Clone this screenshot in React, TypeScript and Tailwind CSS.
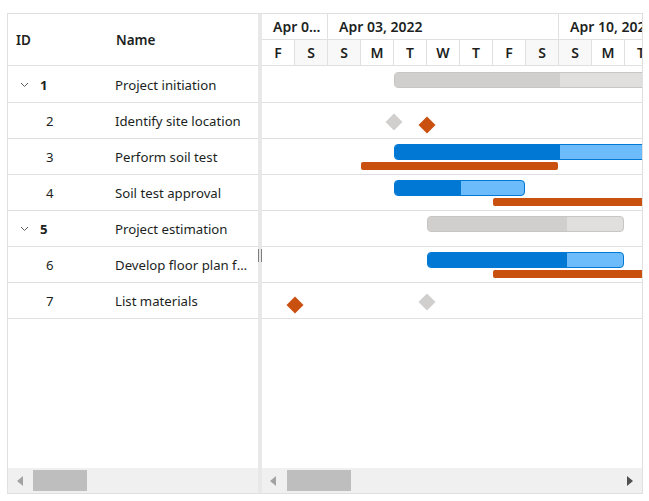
import React from "react";

const FONT = { fontFamily: '"Noto Sans", "Open Sans", Arial, sans-serif' };

type Row = { id: number; name: string; parent?: boolean };
const rows: Row[] = [
  { id: 1, name: "Project initiation", parent: true },
  { id: 2, name: "Identify site location" },
  { id: 3, name: "Perform soil test" },
  { id: 4, name: "Soil test approval" },
  { id: 5, name: "Project estimation", parent: true },
  { id: 6, name: "Develop floor plan for estimation" },
  { id: 7, name: "List materials" },
];

const days = ["F", "S", "S", "M", "T", "W", "T", "F", "S", "S", "M", "T"];
const weekend = [false, true, true, false, false, false, false, false, true, true, false, false];

type Bar = { left: number; width: number; progress: number; kind: "parent" | "child" };
type Base = { left: number; width: number };
type Mile = { cx: number; cy: number; kind: "gray" | "orange" };
type ChartRow = { bar?: Bar; base?: Base; miles?: Mile[] };

const chart: ChartRow[] = [
  { bar: { left: 132, width: 300, progress: 165, kind: "parent" } },
  { miles: [{ cx: 132, cy: 19, kind: "gray" }, { cx: 165, cy: 22, kind: "orange" }] },
  { bar: { left: 132, width: 300, progress: 165, kind: "child" }, base: { left: 99, width: 197 } },
  { bar: { left: 132, width: 131, progress: 66, kind: "child" }, base: { left: 231, width: 300 } },
  { bar: { left: 165, width: 197, progress: 139, kind: "parent" } },
  { bar: { left: 165, width: 197, progress: 139, kind: "child" }, base: { left: 231, width: 300 } },
  { miles: [{ cx: 33, cy: 22, kind: "orange" }, { cx: 165, cy: 19, kind: "gray" }] },
];

function Chevron() {
  return (
    <svg width="9" height="6" viewBox="0 0 9 6" className="shrink-0">
      <polyline points="1,1 4.5,4.5 8,1" fill="none" stroke="#605e5c" strokeWidth="1" />
    </svg>
  );
}

function ArrowLeft({ color }: { color: string }) {
  return (
    <svg width="6" height="10" viewBox="0 0 6 10">
      <polygon points="6,0 0,5 6,10" fill={color} />
    </svg>
  );
}
function ArrowRight({ color }: { color: string }) {
  return (
    <svg width="6" height="10" viewBox="0 0 6 10">
      <polygon points="0,0 6,5 0,10" fill={color} />
    </svg>
  );
}

function TaskBar({ bar, top }: { bar: Bar; top: number }) {
  const isParent = bar.kind === "parent";
  return (
    <div
      className={`absolute h-[16px] rounded-[4px] overflow-hidden border ${
        isParent ? "border-[#c8c6c4] bg-[#e1dfdd]" : "border-[#0078d4] bg-[#6cbcfc]"
      }`}
      style={{ left: bar.left, width: bar.width, top }}
    >
      <div
        className={`h-full ${isParent ? "bg-[#d0cfce]" : "bg-[#0078d4]"}`}
        style={{ width: bar.progress }}
      />
    </div>
  );
}

export default function App() {
  return (
    <div className="w-[649px] h-[501px] bg-white pt-[13px] pl-[7px] text-[#201f1e]" style={FONT}>
      <div className="w-[636px] h-[481px] border border-[#e0e0e0] flex">
        {/* Left grid */}
        <div className="w-[250px] flex flex-col">
          <div className="h-[52px] pt-[2px] border-b border-[#e0e0e0] flex items-center text-[13.5px] font-semibold">
            <div className="w-[100px] pl-[8px]">ID</div>
            <div className="pl-[8px]">Name</div>
          </div>
          {rows.map((r, i) => (
            <div
              key={r.id}
              className={`${i === 0 ? "h-[37px] pt-[3px]" : "h-[36px] pt-[2px]"} border-b border-[#e0e0e0] flex items-center text-[13.2px]`}
            >
              <div className="w-[100px] flex items-center">
                {r.parent ? (
                  <div className="flex items-center pl-[12px] gap-[11px]">
                    <Chevron />
                    <span className="font-bold">{r.id}</span>
                  </div>
                ) : (
                  <span className="pl-[38px]">{r.id}</span>
                )}
              </div>
              <div className="flex-1 min-w-0 pl-[7px] pr-[9px] truncate">{r.name}</div>
            </div>
          ))}
          <div className="flex-1" />
          <div className="h-[25px] bg-[#f0f0f0] relative flex items-center">
            <div className="pl-[9px] flex items-center">
              <ArrowLeft color="#a3a3a3" />
            </div>
            <div className="absolute left-[25px] top-[2px] w-[54px] h-[21px] bg-[#bebebe]" />
          </div>
        </div>

        {/* Splitter */}
        <div className="w-[4px] bg-[#e8e8e8] flex items-center justify-center">
          <div className="flex gap-[2px] h-[13px] mt-[4px]">
            <div className="w-[1px] h-full bg-[#7f7f7f]" />
            <div className="w-[1px] h-full bg-[#7f7f7f]" />
          </div>
        </div>

        {/* Chart */}
        <div className="w-[380px] flex flex-col overflow-hidden">
          <div className="h-[52px] border-b border-[#e0e0e0] flex flex-col font-semibold text-[14px]">
            <div className="h-[26px] border-b border-[#e0e0e0] flex shrink-0">
              <div className="w-[66px] shrink-0 border-r border-[#e0e0e0] pl-[11px] flex items-center whitespace-nowrap">
                Apr 0...
              </div>
              <div className="w-[231px] shrink-0 border-r border-[#e0e0e0] pl-[11px] flex items-center whitespace-nowrap">
                Apr 03, 2022
              </div>
              <div className="w-[231px] shrink-0 pl-[11px] flex items-center whitespace-nowrap">
                Apr 10, 2022
              </div>
            </div>
            <div className="flex-1 flex">
              {days.map((d, i) => (
                <div
                  key={i}
                  className={`w-[33px] shrink-0 border-r border-[#e0e0e0] flex items-center justify-center ${
                    weekend[i] ? "bg-[#f9f8f8]" : "bg-white"
                  }`}
                >
                  {d}
                </div>
              ))}
            </div>
          </div>
          {chart.map((c, i) => {
            const off = i === 0 ? 1 : 0;
            return (
              <div
                key={i}
                className={`${i === 0 ? "h-[37px]" : "h-[36px]"} border-b border-[#e0e0e0] relative shrink-0`}
              >
                {c.bar && <TaskBar bar={c.bar} top={5 + off} />}
                {c.base && (
                  <div
                    className="absolute h-[8px] rounded-[2px] bg-[#ca5010]"
                    style={{ left: c.base.left, width: c.base.width, top: 23 }}
                  />
                )}
                {c.miles &&
                  c.miles.map((m, k) => (
                    <div
                      key={k}
                      className={`absolute w-[12px] h-[12px] rotate-45 ${
                        m.kind === "gray" ? "bg-[#d0cfce]" : "bg-[#ca5010]"
                      }`}
                      style={{ left: m.cx - 6, top: m.cy - 6 }}
                    />
                  ))}
              </div>
            );
          })}
          <div className="flex-1" />
          <div className="h-[25px] bg-[#f0f0f0] relative flex items-center justify-between shrink-0">
            <div className="pl-[8px] flex items-center">
              <ArrowLeft color="#a3a3a3" />
            </div>
            <div className="absolute left-[25px] top-[2px] w-[64px] h-[21px] bg-[#bebebe]" />
            <div className="pr-[9px] flex items-center">
              <ArrowRight color="#505050" />
            </div>
          </div>
        </div>
      </div>
    </div>
  );
}
